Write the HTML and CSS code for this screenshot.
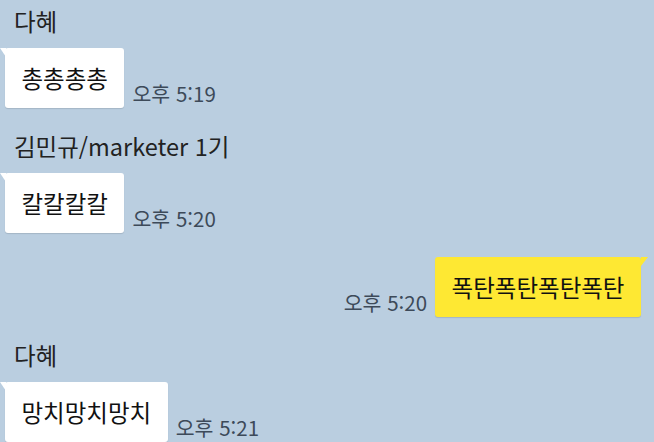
FILE: index.html
```html
<!DOCTYPE html>
<html lang="ko">

<head>
    <meta charset="UTF-8">
    <meta name="viewport" content="width=device-width, initial-scale=1.0">
    <title>채팅</title>
    <link rel="stylesheet" href="styles.css">
</head>

<body>

    <div class="chat">
        <div class="group">
            <p class="name">다혜</p>
            <div class="row">
                <div class="bubble">총총총총</div>
                <span class="time">오후 5:19</span>
            </div>
        </div>

        <div class="group">
            <p class="name">김민규/marketer 1기</p>
            <div class="row">
                <div class="bubble">칼칼칼칼</div>
                <span class="time">오후 5:20</span>
            </div>
        </div>

        <div class="group mine">
            <div class="row">
                <span class="time">오후 5:20</span>
                <div class="bubble">폭탄폭탄폭탄폭탄</div>
            </div>
        </div>

        <div class="group">
            <p class="name">다혜</p>
            <div class="row">
                <div class="bubble">망치망치망치</div>
                <span class="time">오후 5:21</span>
            </div>
        </div>
    </div>

</body>

</html>
```

FILE: styles.css
```css
body {
    margin: 0;
    background-color: #bacee0;
    font-family: "Noto Sans CJK KR", "Noto Sans", sans-serif;
    color: #1e1e1e;
    overflow: hidden;
}

.chat {
    display: flex;
    flex-direction: column;
    gap: 24px;
    padding: 7px 13px 0 5px;
}

.name {
    margin: 0 0 13px 9px;
    font-size: 23.5px;
    line-height: 28px;
    color: #222;
}

.row {
    display: flex;
    align-items: flex-end;
    gap: 8px;
}

.bubble {
    position: relative;
    background-color: #ffffff;
    border-radius: 3px;
    padding: 15px 16.5px;
    font-size: 23.5px;
    line-height: 30px;
    color: #111;
    box-shadow: 0 1px 1px rgba(0, 0, 0, 0.12);
}

/* little tail at the top corner */
.bubble::before {
    content: "";
    position: absolute;
    top: 0;
    left: -5px;
    border-top: 9px solid #ffffff;
    border-left: 6px solid transparent;
}

.time {
    font-size: 20.5px;
    line-height: 22px;
    margin-bottom: 4px;
    color: #3d4a59;
}

.mine .row {
    justify-content: flex-end;
}

.mine .bubble {
    background-color: #fee833;
}

.mine .bubble::before {
    left: auto;
    right: -7px;
    border-top: 9px solid #fee833;
    border-left: none;
    border-right: 7px solid transparent;
}
```
